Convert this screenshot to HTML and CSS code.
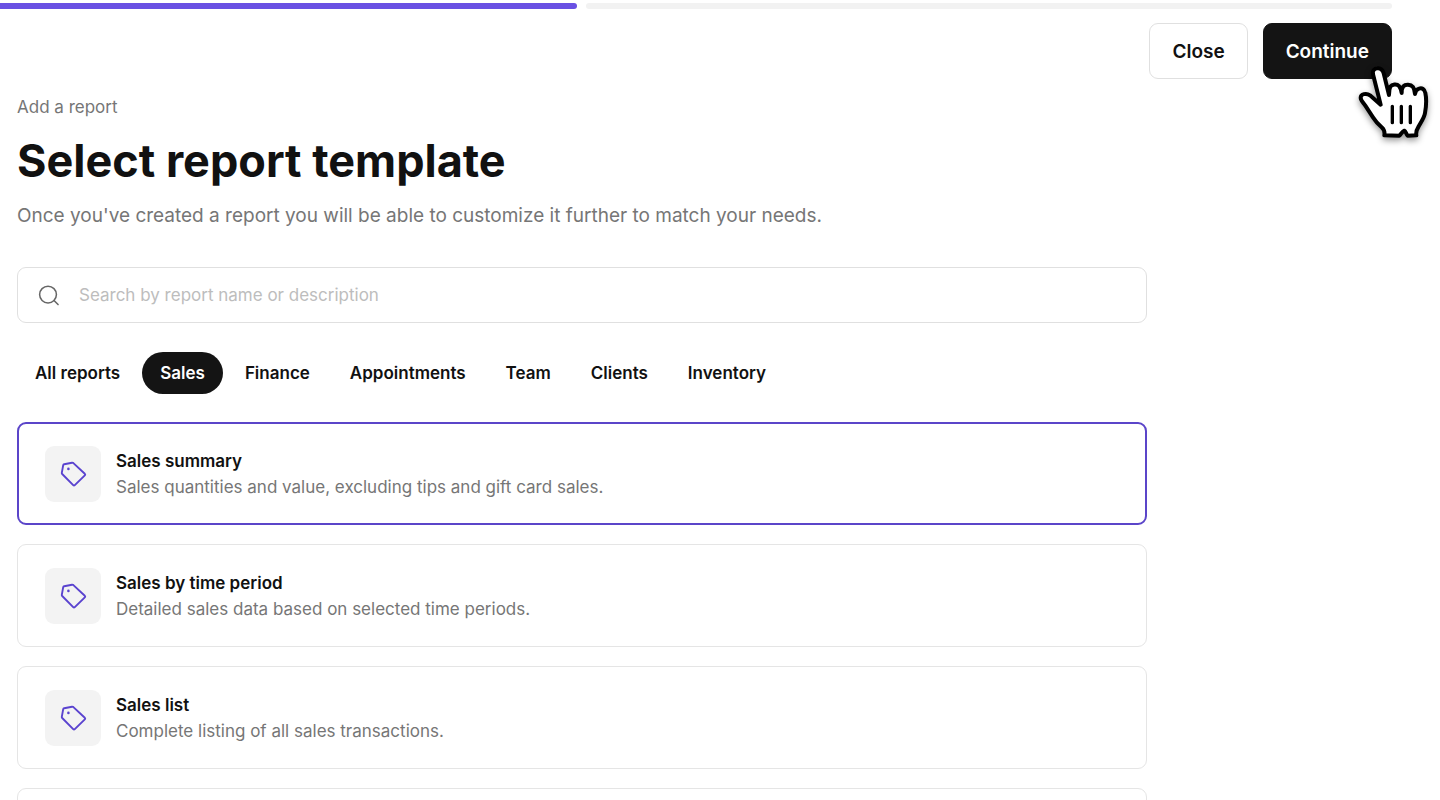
FILE: index.html
```html
<!DOCTYPE html>
<html lang="en">
<head>
<meta charset="utf-8">
<title>Select report template</title>
<link rel="stylesheet" href="styles.css">
</head>

<body>
<!-- Tag icon shared by the report cards -->
<svg class="sprite" aria-hidden="true">
  <symbol id="tag" viewBox="0 0 28 28">
    <path d="M5.2 4.2Q4.4 4.4 4.2 5.2L2.8 12.8Q2.7 13.5 3.2 14L14.2 25.2Q15 26 15.8 25.2L25.8 15.4Q26.6 14.6 25.8 13.8L14.4 3.1Q13.8 2.6 13 2.7Z" fill="none" stroke="currentColor" stroke-width="1.9" stroke-linejoin="round"/>
    <circle cx="9.4" cy="8.9" r="1.3" fill="currentColor"/>
  </symbol>
</svg>

<div class="page">
  <div class="progress">
    <div class="step done"></div>
    <div class="step"></div>
  </div>

  <header class="actions">
    <button type="button" class="btn">Close</button>
    <div class="continue">
      <button type="button" class="btn btn-dark">Continue</button>
      <svg class="hand" viewBox="0 0 270 255" aria-hidden="true">
        <path d="M82 25C72 25 67 33 69 43L92 134L60 106C49 98 32 102 32 113C32 121 40 128 46 137L69 172C78 186 88 196 95 202C102 208 105 215 103 226L148 227C152 224 157 214 163 212C168 214 168 223 173 227L199 226C197 216 201 207 206 199C213 186 223 173 225 159C228 142 230 117 226 99C224 87 216 83 207 86C200 88 196 94 195 102C194 96 193 86 189 81C182 72 166 72 160 79C156 84 155 92 155 99C154 92 151 83 147 78C140 70 126 73 121 80C118 86 117 96 117 105L101 40C98 29 91 24 82 25Z" fill="#fff" stroke="#000" stroke-width="12" stroke-linejoin="round"/>
        <path d="M127 139V188M154 139V188M181 139V188" fill="none" stroke="#000" stroke-width="10" stroke-linecap="round"/>
      </svg>
    </div>
  </header>

  <main class="content">
    <p class="crumb">Add a report</p>
    <h1>Select report template</h1>
    <p class="intro">Once you've created a report you will be able to customize it further to match your needs.</p>

    <label class="search">
      <svg viewBox="0 0 22 22" aria-hidden="true">
        <circle cx="10.5" cy="10" r="8.8"/>
        <path d="M16.8 16.3 21 20.5"/>
      </svg>
      <input type="text" aria-label="Search reports" placeholder="Search by report name or description">
    </label>

    <nav class="tabs">
      <button type="button">All reports</button>
      <button type="button" class="active">Sales</button>
      <button type="button">Finance</button>
      <button type="button">Appointments</button>
      <button type="button">Team</button>
      <button type="button">Clients</button>
      <button type="button">Inventory</button>
    </nav>

    <div class="reports">
      <button type="button" class="card selected">
        <span class="tile"><svg><use href="#tag"/></svg></span>
        <span class="text">
          <span class="name">Sales summary</span>
          <span class="desc">Sales quantities and value, excluding tips and gift card sales.</span>
        </span>
      </button>
      <button type="button" class="card">
        <span class="tile"><svg><use href="#tag"/></svg></span>
        <span class="text">
          <span class="name">Sales by time period</span>
          <span class="desc">Detailed sales data based on selected time periods.</span>
        </span>
      </button>
      <button type="button" class="card">
        <span class="tile"><svg><use href="#tag"/></svg></span>
        <span class="text">
          <span class="name">Sales list</span>
          <span class="desc">Complete listing of all sales transactions.</span>
        </span>
      </button>
      <div class="card"></div>
    </div>
  </main>
</div>
</body>
</html>
```
FILE: styles.css
```css
* {
  box-sizing: border-box;
}

body {
  margin: 0;
  background: #fff;
  color: #111;
  font-family: Inter, "Liberation Sans", sans-serif;
}

button, input {
  font: inherit;
  color: inherit;
}

button {
  cursor: pointer;
}

.sprite {
  display: none;
}

.page {
  height: 100vh;
  overflow: hidden;
}

/* progress */
.progress {
  display: grid;
  grid-template-columns: 577fr 806fr;
  gap: 9px;
  padding: 3px 48px 0 0;
}

.step {
  height: 6px;
  border-radius: 3px;
  background: #f2f2f2;
}

.step.done {
  background: #6950e3;
  border-top-left-radius: 0;
  border-bottom-left-radius: 0;
}

/* top buttons */
.actions {
  display: flex;
  justify-content: flex-end;
  gap: 15px;
  padding: 14px 48px 0 0;
}

.btn {
  height: 56px;
  padding: 0 22px;
  border: 1px solid #e0e0e0;
  border-radius: 9px;
  background: #fff;
  font-size: 19px;
  font-weight: 600;
}

.btn-dark {
  border-color: #141414;
  background: #141414;
  color: #fff;
}

.continue {
  position: relative;
}

.hand {
  position: absolute;
  top: 37px;
  right: -48px;
  width: 90px;
  height: 85px;
  filter: drop-shadow(0 3px 3px rgba(0, 0, 0, 0.4));
  pointer-events: none;
}

/* main column */
.content {
  max-width: 1164px;
  padding: 16px 17px 0;
}

.crumb, .intro {
  margin: 0;
  color: #767676;
}

.crumb {
  font-size: 17px;
  line-height: 24px;
}

h1 {
  margin: 14px 0 13px;
  font-size: 45px;
  line-height: 56px;
  font-weight: 700;
}

.intro {
  font-size: 19px;
  line-height: 28px;
}

.search {
  display: flex;
  align-items: center;
  gap: 20px;
  height: 56px;
  margin-top: 37px;
  padding: 0 20px;
  border: 1px solid #e0e0e0;
  border-radius: 9px;
}

.search svg {
  width: 21px;
  height: 21px;
  fill: none;
  stroke: #666;
  stroke-width: 1.6;
  stroke-linecap: round;
}

.search input {
  flex: 1;
  padding: 0;
  border: 0;
  outline: 0;
  background: none;
  font-size: 17px;
}

.search input::placeholder {
  color: #bdbdbd;
  opacity: 1;
}

.tabs {
  display: flex;
  gap: 4px;
  margin-top: 29px;
}

.tabs button {
  height: 42px;
  padding: 0 18px;
  border: 0;
  border-radius: 21px;
  background: none;
  font-size: 17px;
  font-weight: 600;
}

.tabs .active {
  background: #141414;
  color: #fff;
}

/* report cards */
.reports {
  display: grid;
  gap: 19px;
  margin-top: 28px;
}

.card {
  display: flex;
  align-items: center;
  gap: 15px;
  min-height: 103px;
  padding: 0 27px;
  border: 1px solid #e5e5e5;
  border-radius: 9px;
  background: #fff;
  text-align: left;
}

.card.selected {
  padding: 0 26px;
  border: 2px solid #5b45c9;
}

.tile {
  display: grid;
  place-items: center;
  width: 56px;
  height: 56px;
  border-radius: 9px;
  background: #f3f3f3;
  color: #5a43cf;
}

.tile svg {
  width: 28px;
  height: 28px;
}

.text {
  display: grid;
  font-size: 17px;
  line-height: 26px;
}

.name {
  font-weight: 600;
}

.desc {
  color: #767676;
}
```
